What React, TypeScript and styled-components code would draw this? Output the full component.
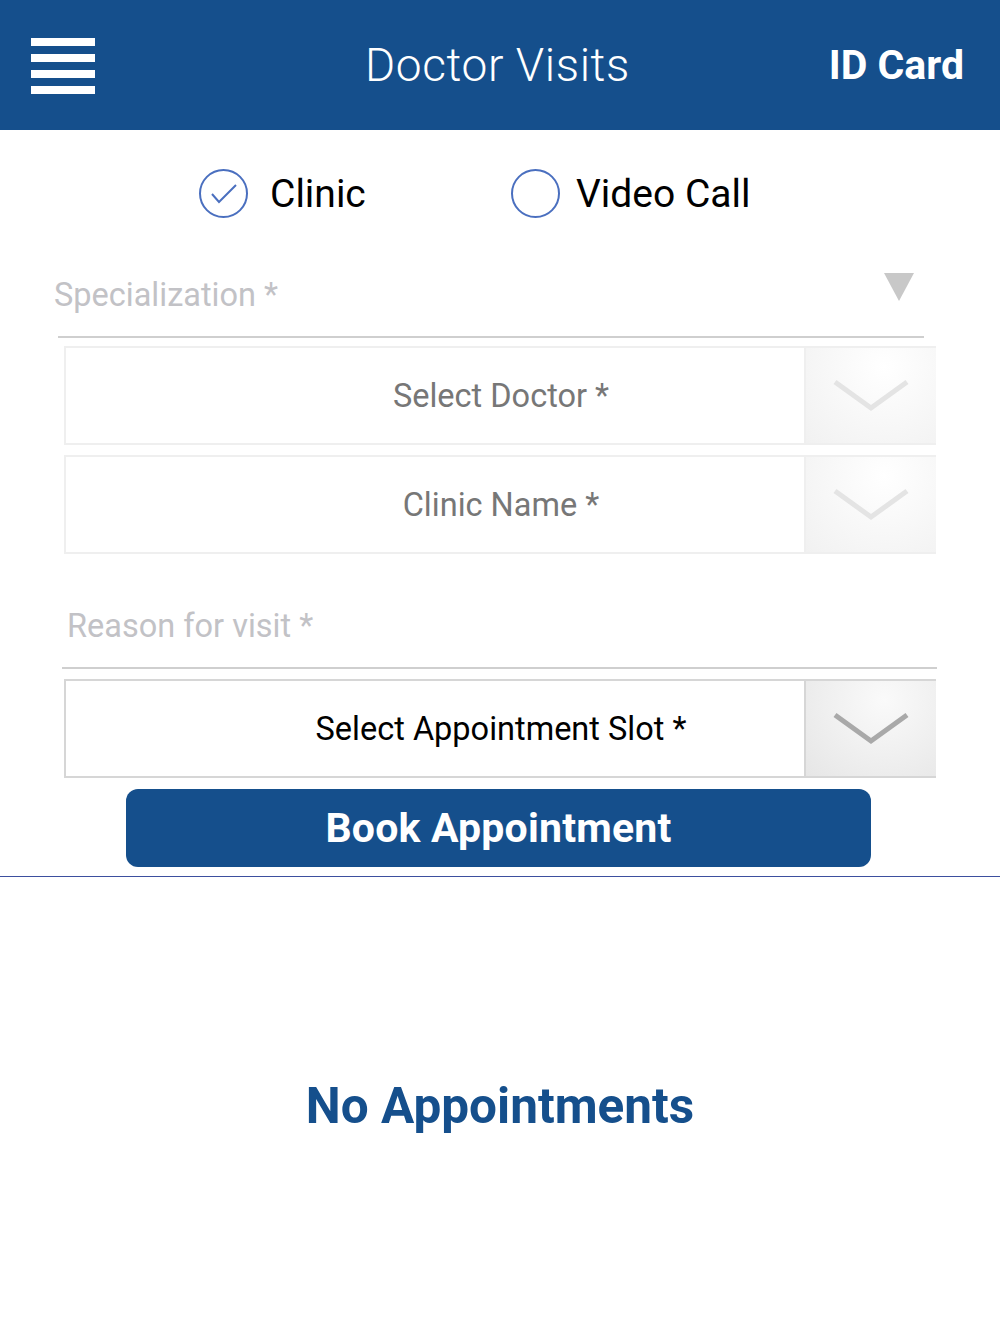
import styled, { createGlobalStyle } from "styled-components";

const BLUE = "#154f8c";

const GlobalStyle = createGlobalStyle`
  body {
    margin: 0;
    background: #ffffff;
    font-family: Roboto, "Liberation Sans", sans-serif;
  }
`;

const Page = styled.div`
  width: 1000px;
  min-height: 1334px;
  display: flex;
  flex-direction: column;
`;

const Header = styled.header`
  height: 130px;
  background: ${BLUE};
  display: grid;
  grid-template-columns: 1fr auto 1fr;
  align-items: center;
  padding: 0 36px 0 31px;
  box-sizing: border-box;
`;

const MenuButton = styled.div`
  width: 64px;
  display: flex;
  flex-direction: column;
  gap: 8px;
  margin-top: 2px;
`;

const MenuBar = styled.span`
  display: block;
  height: 8px;
  background: #ffffff;
`;

const Title = styled.h1`
  margin: 0;
  color: #ffffff;
  font-size: 46px;
  font-weight: 300;
  letter-spacing: 0.6px;
`;

const IdCard = styled.div`
  justify-self: end;
  color: #ffffff;
  font-size: 41px;
  font-weight: 700;
`;

const Form = styled.div`
  display: flex;
  flex-direction: column;
`;

const ModeRow = styled.div`
  display: flex;
  padding-left: 199px;
  padding-top: 39px;
  height: 49px;
`;

const ModeOption = styled.label<{ $width: number }>`
  width: ${(p) => p.$width}px;
  display: flex;
  align-items: center;
  gap: 22px;
  font-size: 39px;
  color: #000000;
`;

const Radio = styled.span`
  width: 49px;
  height: 49px;
  box-sizing: border-box;
  border: 2px solid #4a6fbf;
  border-radius: 50%;
  display: flex;
  align-items: center;
  justify-content: center;
`;

const UnderlineField = styled.div<{ $left: number; $right: number; $top: number }>`
  margin: ${(p) => p.$top}px ${(p) => p.$right}px 0 ${(p) => p.$left}px;
  border-bottom: 2px solid #cfcfcf;
  display: flex;
  align-items: center;
  justify-content: space-between;
  height: 62px;
  padding-bottom: 10px;
`;

const Placeholder = styled.span<{ $shift: number }>`
  margin-left: ${(p) => p.$shift}px;
  font-size: 32.5px;
  color: #c2c2c6;
`;

const Triangle = styled.span`
  width: 0;
  height: 0;
  border-left: 15px solid transparent;
  border-right: 15px solid transparent;
  border-top: 28px solid #c8c8c8;
  margin-right: 10px;
  margin-bottom: 16px;
`;

const SelectBox = styled.div<{ $active?: boolean; $top: number }>`
  margin: ${(p) => p.$top}px 64px 0 64px;
  height: 99px;
  box-sizing: border-box;
  border: 2px solid ${(p) => (p.$active ? "#d6d6d6" : "#efefef")};
  border-right: none;
  display: grid;
  grid-template-columns: 1fr 132px;
`;

const SelectLabel = styled.div<{ $active?: boolean }>`
  display: flex;
  align-items: center;
  justify-content: center;
  font-size: 32.5px;
  color: ${(p) => (p.$active ? "#000000" : "#777777")};
  padding-left: 132px;
`;

const ChevronCell = styled.div<{ $active?: boolean }>`
  border-left: 2px solid ${(p) => (p.$active ? "#d6d6d6" : "#efefef")};
  background: ${(p) =>
    p.$active
      ? "radial-gradient(circle at 60% 20%, #fafafa 0%, #e6e6e6 100%)"
      : "radial-gradient(circle at 60% 20%, #ffffff 0%, #f1f1f1 100%)"};
  display: flex;
  align-items: center;
  justify-content: center;
`;

const BookButton = styled.button`
  margin: 11px auto 0 126px;
  width: 745px;
  height: 78px;
  border: none;
  border-radius: 12px;
  background: ${BLUE};
  color: #ffffff;
  font-family: Roboto, "Liberation Sans", sans-serif;
  font-size: 41px;
  font-weight: 700;
  letter-spacing: 0.2px;
`;

const Divider = styled.hr`
  margin: 9px 0 0 0;
  border: none;
  border-top: 1.5px solid #3d4f9f;
`;

const EmptyState = styled.div`
  margin-top: 200px;
  text-align: center;
  color: ${BLUE};
  font-size: 49.5px;
  font-weight: 700;
`;

const Chevron = ({ active }: { active?: boolean }) => (
  <svg width="76" height="34" viewBox="0 0 76 34">
    <polyline
      points="2,3 38,29 74,3"
      fill="none"
      stroke={active ? "#a9a9a9" : "#e4e4e4"}
      strokeWidth="5"
    />
  </svg>
);

const Check = () => (
  <svg width="28" height="22" viewBox="0 0 28 22">
    <polyline points="2,11 9,19 26,2" fill="none" stroke="#4a6fbf" strokeWidth="2" />
  </svg>
);

type DropdownProps = { label: string; active?: boolean; top: number };

const Dropdown = ({ label, active, top }: DropdownProps) => (
  <SelectBox $active={active} $top={top}>
    <SelectLabel $active={active}>{label}</SelectLabel>
    <ChevronCell $active={active}>
      <Chevron active={active} />
    </ChevronCell>
  </SelectBox>
);

export default function App() {
  return (
    <Page>
      <GlobalStyle />
      <Header>
        <MenuButton>
          <MenuBar />
          <MenuBar />
          <MenuBar />
          <MenuBar />
        </MenuButton>
        <Title>Doctor Visits</Title>
        <IdCard>ID Card</IdCard>
      </Header>
      <Form>
        <ModeRow>
          <ModeOption $width={312}>
            <Radio>
              <Check />
            </Radio>
            Clinic
          </ModeOption>
          <ModeOption $width={260}>
            <Radio />
            <span style={{ marginLeft: -6 }}>Video Call</span>
          </ModeOption>
        </ModeRow>
        <UnderlineField $left={58} $right={76} $top={46}>
          <Placeholder $shift={-4}>Specialization *</Placeholder>
          <Triangle />
        </UnderlineField>
        <Dropdown label="Select Doctor *" top={8} />
        <Dropdown label="Clinic Name *" top={10} />
        <UnderlineField $left={62} $right={63} $top={41}>
          <Placeholder $shift={5}>Reason for visit *</Placeholder>
        </UnderlineField>
        <Dropdown label="Select Appointment Slot *" active top={10} />
        <BookButton>Book Appointment</BookButton>
        <Divider />
        <EmptyState>No Appointments</EmptyState>
      </Form>
    </Page>
  );
}
